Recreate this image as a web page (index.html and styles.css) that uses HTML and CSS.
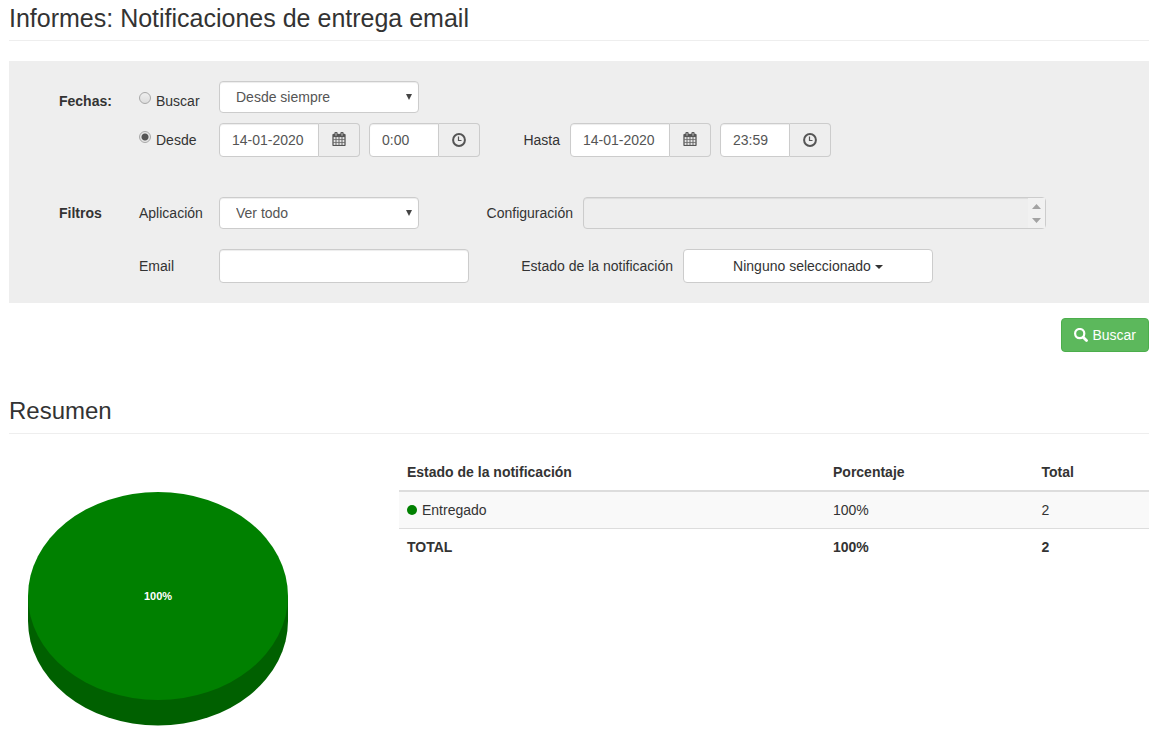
FILE: index.html
```html
<!DOCTYPE html>
<html lang="es">
<head>
<meta charset="utf-8">
<title>Informes: Notificaciones de entrega email</title>
<link rel="stylesheet" href="styles.css">
</head>
<body>
<svg class="sprite" aria-hidden="true">
  <symbol id="calendar" viewBox="0 0 1664 1792"><path stroke="currentColor" stroke-width="36" d="M128 1664h288v-288h-288v288zm352 0h320v-288h-320v288zm-352-352h288v-320h-288v320zm352 0h320v-320h-320v320zm-352-384h288v-288h-288v288zm736 736h320v-288h-320v288zm-384-736h320v-288h-320v288zm768 736h288v-288h-288v288zm-384-352h320v-320h-320v320zm-352-864v-288q0-13-9.500-22.500t-22.500-9.500h-64q-13 0-22.500 9.500t-9.500 22.500v288q0 13 9.500 22.500t22.500 9.500h64q13 0 22.500-9.500t9.500-22.500zm736 864h288v-320h-288v320zm-384-384h320v-288h-320v288zm384 0h288v-288h-288v288zm32-480v-288q0-13-9.500-22.500t-22.500-9.500h-64q-13 0-22.500 9.500t-9.500 22.500v288q0 13 9.500 22.500t22.500 9.500h64q13 0 22.500-9.500t9.500-22.500zm384-64v1280q0 52-38 90t-90 38h-1408q-52 0-90-38t-38-90v-1280q0-52 38-90t90-38h128v-96q0-66 47-113t113-47h64q66 0 113 47t47 113v96h384v-96q0-66 47-113t113-47h64q66 0 113 47t47 113v96h128q52 0 90 38t38 90z"/></symbol>
  <symbol id="clock" viewBox="0 0 14 14"><circle cx="7" cy="7" r="5.900" fill="none" stroke="currentColor" stroke-width="2"/><path d="M6.500 3.500V7.500H9.500" fill="none" stroke="currentColor" stroke-width="1.200"/></symbol>
  <symbol id="down" viewBox="0 0 6 6"><path d="M0 0h6L3 6z"/></symbol>
</svg>

<main class="page">
  <h1 class="heading title">Informes: Notificaciones de entrega email</h1>

  <form class="search">
    <div class="panel">
      <div class="row row-top">
        <strong class="head">Fechas:</strong>
        <label class="radio"><input type="radio" name="modo">Buscar</label>
        <div class="select-box">
          <select class="control select" aria-label="Periodo"><option>Desde siempre</option></select>
          <svg class="arrow"><use href="#down"/></svg>
        </div>
      </div>

      <div class="row row-dates">
        <span class="head"></span>
        <label class="radio"><input type="radio" name="modo" checked>Desde</label>
        <div class="group">
          <input class="control date" type="text" value="14-01-2020" aria-label="Fecha desde">
          <button class="addon" type="button" aria-label="Elegir fecha desde"><svg class="calendar"><use href="#calendar"/></svg></button>
        </div>
        <div class="group">
          <input class="control time" type="text" value="0:00" aria-label="Hora desde">
          <button class="addon" type="button" aria-label="Elegir hora desde"><svg class="icon"><use href="#clock"/></svg></button>
        </div>
        <label class="side side-sm" for="hasta">Hasta</label>
        <div class="group">
          <input class="control date" id="hasta" type="text" value="14-01-2020">
          <button class="addon" type="button" aria-label="Elegir fecha hasta"><svg class="calendar"><use href="#calendar"/></svg></button>
        </div>
        <div class="group">
          <input class="control time" type="text" value="23:59" aria-label="Hora hasta">
          <button class="addon" type="button" aria-label="Elegir hora hasta"><svg class="icon"><use href="#clock"/></svg></button>
        </div>
      </div>

      <div class="row">
        <strong class="head">Filtros</strong>
        <label class="field" for="aplicacion">Aplicación</label>
        <div class="select-box">
          <select class="control select" id="aplicacion"><option>Ver todo</option></select>
          <svg class="arrow"><use href="#down"/></svg>
        </div>
        <label class="side side-md" for="configuracion">Configuración</label>
        <div class="list-box">
          <select class="control list" id="configuracion" multiple disabled></select>
          <svg class="scroll" viewBox="0 0 17 30"><path d="M4 11h9L8.500 6zM4 20h9l-4.500 5z"/></svg>
        </div>
      </div>

      <div class="row row-email">
        <span class="head"></span>
        <label class="field" for="email">Email</label>
        <input class="control email" id="email" type="text">
        <label class="side side-lg" for="estado">Estado de la notificación</label>
        <button class="dropdown" id="estado" type="button">Ninguno seleccionado<span class="caret"></span></button>
      </div>
    </div>

    <div class="actions">
      <button class="submit" type="submit">
        <svg class="icon" viewBox="0 0 14 14"><circle cx="5.700" cy="5.600" r="4.600" fill="none" stroke="currentColor" stroke-width="2.200"/><path d="M9.200 9.200l3.300 3.300" stroke="currentColor" stroke-width="2.800" stroke-linecap="round"/></svg>
        Buscar
      </button>
    </div>
  </form>

  <h2 class="heading">Resumen</h2>

  <section class="summary">
    <svg class="pie" viewBox="0 0 300 276" role="img" aria-label="Entregado 100%">
      <path class="pie-side" d="M19 142v25a130 104.500 0 0 0 260 0v-25z"/>
      <ellipse class="pie-top" cx="149" cy="142" rx="130" ry="104"/>
      <text class="pie-text" x="149" y="146">100%</text>
    </svg>
    <table class="table">
      <thead><tr><th class="c-state">Estado de la notificación</th><th class="c-percent">Porcentaje</th><th class="c-total">Total</th></tr></thead>
      <tbody>
        <tr class="item"><td><span class="state"><span class="dot"></span>Entregado</span></td><td>100%</td><td>2</td></tr>
        <tr class="sum"><td>TOTAL</td><td>100%</td><td>2</td></tr>
      </tbody>
    </table>
  </section>
</main>
</body>
</html>
```

FILE: styles.css
```css
* {
  box-sizing: border-box;
}

body {
  margin: 0;
  background: #fff;
  color: #333;
  font: 14px/20px "Liberation Sans", Arial, sans-serif;
}

svg {
  display: block;
  fill: currentColor;
}

.sprite {
  position: absolute;
  width: 0;
  height: 0;
}

.page {
  padding: 5px 9px 0;
}

.heading {
  margin: 0 0 20px;
  padding-bottom: 9px;
  border-bottom: 1px solid #eee;
  font-size: 24px;
  font-weight: 400;
  line-height: 26px;
}

.title {
  font-size: 25px;
}

.panel {
  padding: 20px 0 20px 50px;
  background: #eee;
}

.row {
  display: flex;
  align-items: center;
  margin-bottom: 20px;
}

.row-top {
  align-items: flex-start;
  margin-bottom: 10px;
}

.row-top .head,
.row-top .radio {
  margin-top: 10px;
}

.row-dates {
  margin-bottom: 40px;
}

.row-email {
  margin-bottom: 0;
}

.head,
.field,
.radio {
  flex: 0 0 80px;
}

.radio {
  display: flex;
  align-items: flex-start;
}

.radio input {
  appearance: none;
  width: 12px;
  height: 12px;
  margin: 1px 5px 0 0;
  border: 1px solid #a8a8a8;
  border-radius: 50%;
  background: linear-gradient(#eee, #ddd);
}

.radio input:checked {
  background: radial-gradient(circle, #555 0 3px, #e6e6e6 4px);
}

.control {
  height: 34px;
  margin: 0;
  padding: 6px 12px;
  border: 1px solid #ccc;
  border-radius: 4px;
  background: #fff;
  box-shadow: inset 0 1px 1px rgba(0, 0, 0, .075);
  color: #555;
  font: inherit;
}

.select-box,
.list-box {
  position: relative;
}

.select {
  display: block;
  appearance: none;
  width: 200px;
  height: 32px;
  padding: 5px 16px;
}

.arrow {
  position: absolute;
  top: 13px;
  right: 7px;
  width: 6px;
  height: 6px;
  color: #444;
  pointer-events: none;
}

.group {
  display: flex;
}

.group + .group {
  margin-left: 9px;
}

.group .control {
  border-radius: 4px 0 0 4px;
}

.date {
  width: 100px;
}

.time {
  width: 70px;
}

.addon {
  display: flex;
  align-items: center;
  justify-content: center;
  width: 41px;
  padding: 0;
  border: 1px solid #ccc;
  border-left: 0;
  border-radius: 0 4px 4px 0;
  background: #eee;
  color: #555;
}

.icon {
  width: 14px;
  height: 14px;
}

.calendar {
  width: 14px;
  height: 14px;
  margin-bottom: 2px;
}

.side {
  margin-right: 10px;
  text-align: right;
}

.side-sm {
  width: 80px;
}

.side-md {
  width: 154px;
}

.side-lg {
  width: 204px;
}

.list-box {
  width: 463px;
}

.list {
  display: block;
  width: 100%;
  height: 32px;
  background: #eee;
  overflow: hidden;
  opacity: 1;
}

.scroll {
  position: absolute;
  top: 1px;
  right: 1px;
  width: 17px;
  height: 30px;
  background: #f1f1f1;
  color: #a3a3a3;
}

.email,
.dropdown {
  width: 250px;
}

.dropdown {
  display: flex;
  align-items: center;
  justify-content: center;
  gap: 4px;
  height: 34px;
  border: 1px solid #ccc;
  border-radius: 4px;
  background: #fff;
  color: #333;
  font: inherit;
}

.caret {
  margin-top: 2px;
  border-top: 4px solid;
  border-right: 4px solid transparent;
  border-left: 4px solid transparent;
}

.actions {
  display: flex;
  justify-content: flex-end;
  padding: 15px 0 46px;
}

.submit {
  display: flex;
  align-items: center;
  gap: 4px;
  padding: 6px 12px;
  border: 1px solid #4cae4c;
  border-radius: 4px;
  background: #5cb85c;
  color: #fff;
  font: inherit;
}

.summary {
  display: grid;
  grid-template-columns: 13fr 25fr;
  align-items: start;
}

.pie {
  width: 300px;
  height: 276px;
}

.pie-side {
  fill: #006000;
}

.pie-top {
  fill: #008000;
}

.pie-text {
  fill: #fff;
  font-size: 11px;
  font-weight: 700;
  text-anchor: middle;
}

.table {
  width: 100%;
  border-spacing: 0;
  table-layout: fixed;
  text-align: left;
}

.table th,
.table td {
  padding: 8px;
}

.table th {
  border-bottom: 2px solid #ddd;
}

.c-state {
  width: 56.8%;
}

.c-percent {
  width: 27.8%;
}

.c-total {
  width: 15.4%;
}

.item {
  background: #f9f9f9;
}

.sum td {
  border-top: 1px solid #ddd;
  font-weight: 700;
}

.state {
  display: flex;
  align-items: center;
  gap: 5px;
}

.dot {
  width: 10px;
  height: 10px;
  border-radius: 50%;
  background: #008000;
}
```
